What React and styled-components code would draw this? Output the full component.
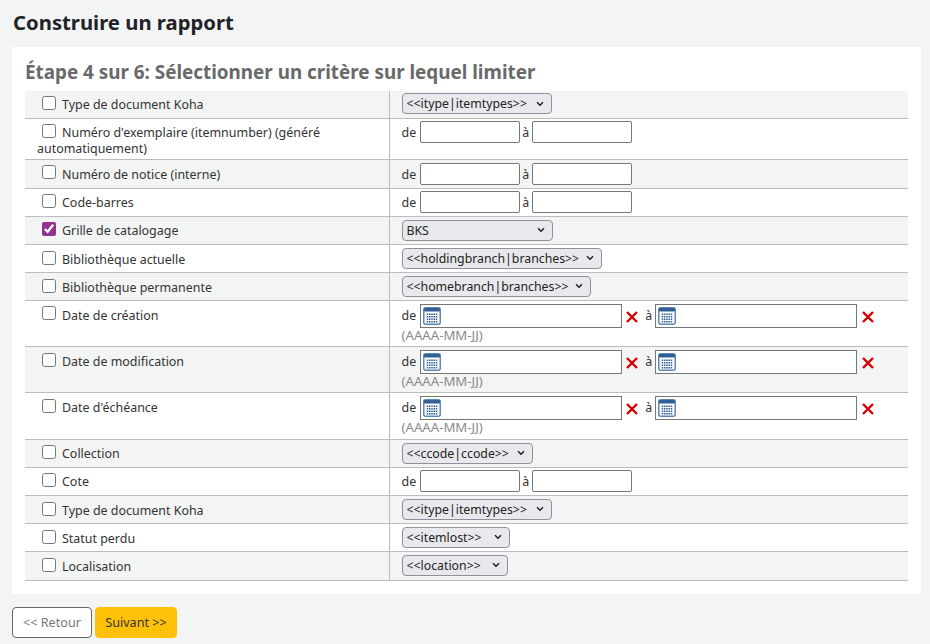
import React from 'react'
import styled, { createGlobalStyle } from 'styled-components'

const GlobalStyle = createGlobalStyle`
  html, body {
    margin: 0;
    padding: 0;
    background: #f3f4f4;
    color: #333;
    font-family: 'Noto Sans', sans-serif;
    font-size: 12.45px;
    line-height: 17px;
  }
`

const chevron = `url("data:image/svg+xml,%3Csvg xmlns='http://www.w3.org/2000/svg' width='8' height='6' viewBox='0 0 8 6'%3E%3Cpath d='M1 1.2L4 4.2L7 1.2' fill='none' stroke='%23222' stroke-width='1.5'/%3E%3C/svg%3E")`

const Page = styled.main`
  padding: 9px 9px 0 12px;
`

const Title = styled.h1`
  margin: 0 0 11px 1px;
  font-size: 20.3px;
  line-height: 27px;
  font-weight: 700;
  color: #1f2328;
`

const Panel = styled.section`
  background: #fff;
  padding: 13px;
`

const StepTitle = styled.h2`
  margin: 0 0 7px;
  font-size: 18.85px;
  line-height: 24px;
  font-weight: 700;
  color: #696969;
`

const Table = styled.table`
  width: 883px;
  border-collapse: collapse;
  table-layout: fixed;
`

const Row = styled.tr`
  background: ${(p) => (p.$shaded ? '#f3f4f4' : '#fff')};
  height: ${(p) => p.$h}px;
  border-bottom: 1px solid #bcbcbc;
`

const LabelCell = styled.td`
  width: 364px;
  box-sizing: border-box;
  padding: ${(p) => p.$top}px 12px 1px;
  vertical-align: top;
  line-height: 16px;
  border-right: 1px solid #bcbcbc;
  color: #333;
`

const ValueCell = styled.td`
  padding: ${(p) => p.$top}px 12px 2px;
  vertical-align: top;
`

const Check = styled.input.attrs({ type: 'checkbox' })`
  width: 14px;
  height: 14px;
  margin: ${(p) => -p.$lift}px 6px 0 5px;
  vertical-align: top;
  accent-color: #92318e;
`

const Select = styled.select`
  display: block;
  appearance: none;
  box-sizing: border-box;
  height: 21px;
  padding: 0 16px 0 4px;
  font: 12.3px 'Noto Sans', sans-serif;
  color: #222;
  background: #e9e9ed ${chevron} no-repeat right 7px center;
  border: 1px solid #8f8f9d;
  border-radius: 4px;
  width: ${(p) => p.$w}px;
`

const Range = styled.div`
  display: flex;
  align-items: flex-start;
  height: ${(p) => p.$h}px;
  line-height: 24px;
`

const Word = styled.span`
  margin-right: ${(p) => p.$mr}px;
  margin-left: ${(p) => p.$ml || 0}px;
`

const TextInput = styled.input.attrs({ type: 'text' })`
  box-sizing: border-box;
  width: 100px;
  height: 22px;
  padding: 0 4px;
  border: 1px solid #767676;
  border-radius: 2px;
  background: #fff;
`

const DateBox = styled.span`
  position: relative;
  display: block;
  width: 202px;
  height: 24px;
`

const DateInput = styled.input.attrs({ type: 'text' })`
  box-sizing: border-box;
  display: block;
  width: 100%;
  height: 100%;
  padding: 0 4px 0 22px;
  border: 1px solid #767676;
  border-radius: 0;
  background: #fff;
`

const CalendarWrap = styled.span`
  position: absolute;
  left: 3px;
  top: 3px;
  line-height: 0;
`

const ClearMark = styled.span`
  display: block;
  width: 12px;
  height: 12px;
  margin: 7px 7px 0 ${(p) => p.$ml}px;
  line-height: 0;
`

const Hint = styled.div`
  font-size: 13.2px;
  line-height: 16px;
  margin-top: -1px;
  color: #8a8a8a;
`

const Actions = styled.div`
  display: flex;
  gap: 3px;
  margin-top: 13px;
`

const Button = styled.button`
  box-sizing: border-box;
  height: 31px;
  width: ${(p) => p.$w}px;
  padding: 0;
  font: 12.6px 'Noto Sans', sans-serif;
  border-radius: 4px;
  border: 1px solid ${(p) => (p.$primary ? '#ffc107' : '#666')};
  background: ${(p) => (p.$primary ? '#ffc107' : '#fff')};
  color: ${(p) => (p.$primary ? '#333' : '#777')};
`

const CalendarIcon = () => (
  <svg width="18" height="18" viewBox="0 0 18 18">
    <rect x="0.75" y="0.75" width="16.5" height="16.5" rx="2" fill="#fff" stroke="#5f88b5" strokeWidth="1.5" />
    <rect x="1" y="1" width="16" height="3.5" rx="1" fill="#315f93" />
    {[6.5, 9, 11.5, 14].map((y) =>
      [3.75, 6, 8.25, 10.5, 12.75].map((x) => (
        <rect key={`${x}-${y}`} x={x} y={y} width="1.5" height="1.5" fill="#315f93" />
      ))
    )}
  </svg>
)

const ClearIcon = () => (
  <svg width="12" height="12" viewBox="0 0 12 12">
    <path d="M1 1L11 11M11 1L1 11" stroke="#d40000" strokeWidth="2.4" />
  </svg>
)

const DateField = ({ gap }) => (
  <>
    <DateBox>
      <DateInput />
      <CalendarWrap>
        <CalendarIcon />
      </CalendarWrap>
    </DateBox>
    <ClearMark $ml={gap}>
      <ClearIcon />
    </ClearMark>
  </>
)

const NumberRange = () => (
  <Range $h={22}>
    <Word $mr={4}>de</Word>
    <TextInput />
    <Word $mr={3} $ml={2}>à</Word>
    <TextInput />
  </Range>
)

const DateRange = () => (
  <>
    <Range $h={24}>
      <Word $mr={4}>de</Word>
      <DateField gap={4} />
      <Word $mr={3}>à</Word>
      <DateField gap={5} />
    </Range>
    <Hint>(AAAA-MM-JJ)</Hint>
  </>
)

const rows = [
  { label: 'Type de document Koha', h: 27, pad: 6, lift: 1, top: 2, select: '<<itype|itemtypes>>', w: 150 },
  { label: "Numéro d'exemplaire (itemnumber) (généré automatiquement)", h: 41, pad: 6, lift: 1, top: 2, kind: 'number' },
  { label: 'Numéro de notice (interne)', h: 29, pad: 7, lift: 2, top: 3, kind: 'number' },
  { label: 'Code-barres', h: 28, pad: 6, lift: 1, top: 2, kind: 'number' },
  { label: 'Grille de catalogage', h: 28, pad: 6, lift: 1, top: 3, select: 'BKS', w: 151, checked: true },
  { label: 'Bibliothèque actuelle', h: 28, pad: 7, lift: 1, top: 3, select: '<<holdingbranch|branches>>', w: 200 },
  { label: 'Bibliothèque permanente', h: 28, pad: 7, lift: 1, top: 3, select: '<<homebranch|branches>>', w: 189 },
  { label: 'Date de création', h: 46, pad: 7, lift: 2, top: 3, kind: 'date' },
  { label: 'Date de modification', h: 46, pad: 7, lift: 1, top: 3, kind: 'date' },
  { label: "Date d'échéance", h: 47, pad: 7, lift: 1, top: 3, kind: 'date' },
  { label: 'Collection', h: 28, pad: 6, lift: 1, top: 3, select: '<<ccode|ccode>>', w: 131 },
  { label: 'Cote', h: 28, pad: 6, lift: 1, top: 2, kind: 'number' },
  { label: 'Type de document Koha', h: 28, pad: 7, lift: 1, top: 3, select: '<<itype|itemtypes>>', w: 150 },
  { label: 'Statut perdu', h: 28, pad: 7, lift: 1, top: 3, select: '<<itemlost>>', w: 108 },
  { label: 'Localisation', h: 29, pad: 7, lift: 1, top: 3, select: '<<location>>', w: 106 },
]

const App = () => (
  <>
    <GlobalStyle />
    <Page>
      <Title>Construire un rapport</Title>
      <Panel>
        <StepTitle>Étape 4 sur 6: Sélectionner un critère sur lequel limiter</StepTitle>
        <Table>
          <tbody>
            {rows.map((row, i) => (
              <Row key={i} $shaded={i % 2 === 0} $h={row.h}>
                <LabelCell $top={row.pad}>
                  <Check $lift={row.lift} defaultChecked={row.checked} />
                  {row.label}
                </LabelCell>
                <ValueCell $top={row.top}>
                  {row.select && (
                    <Select $w={row.w}>
                      <option>{row.select}</option>
                    </Select>
                  )}
                  {row.kind === 'number' && <NumberRange />}
                  {row.kind === 'date' && <DateRange />}
                </ValueCell>
              </Row>
            ))}
          </tbody>
        </Table>
      </Panel>
      <Actions>
        <Button $w={80}>&lt;&lt; Retour</Button>
        <Button $w={82} $primary>Suivant &gt;&gt;</Button>
      </Actions>
    </Page>
  </>
)

export default App
